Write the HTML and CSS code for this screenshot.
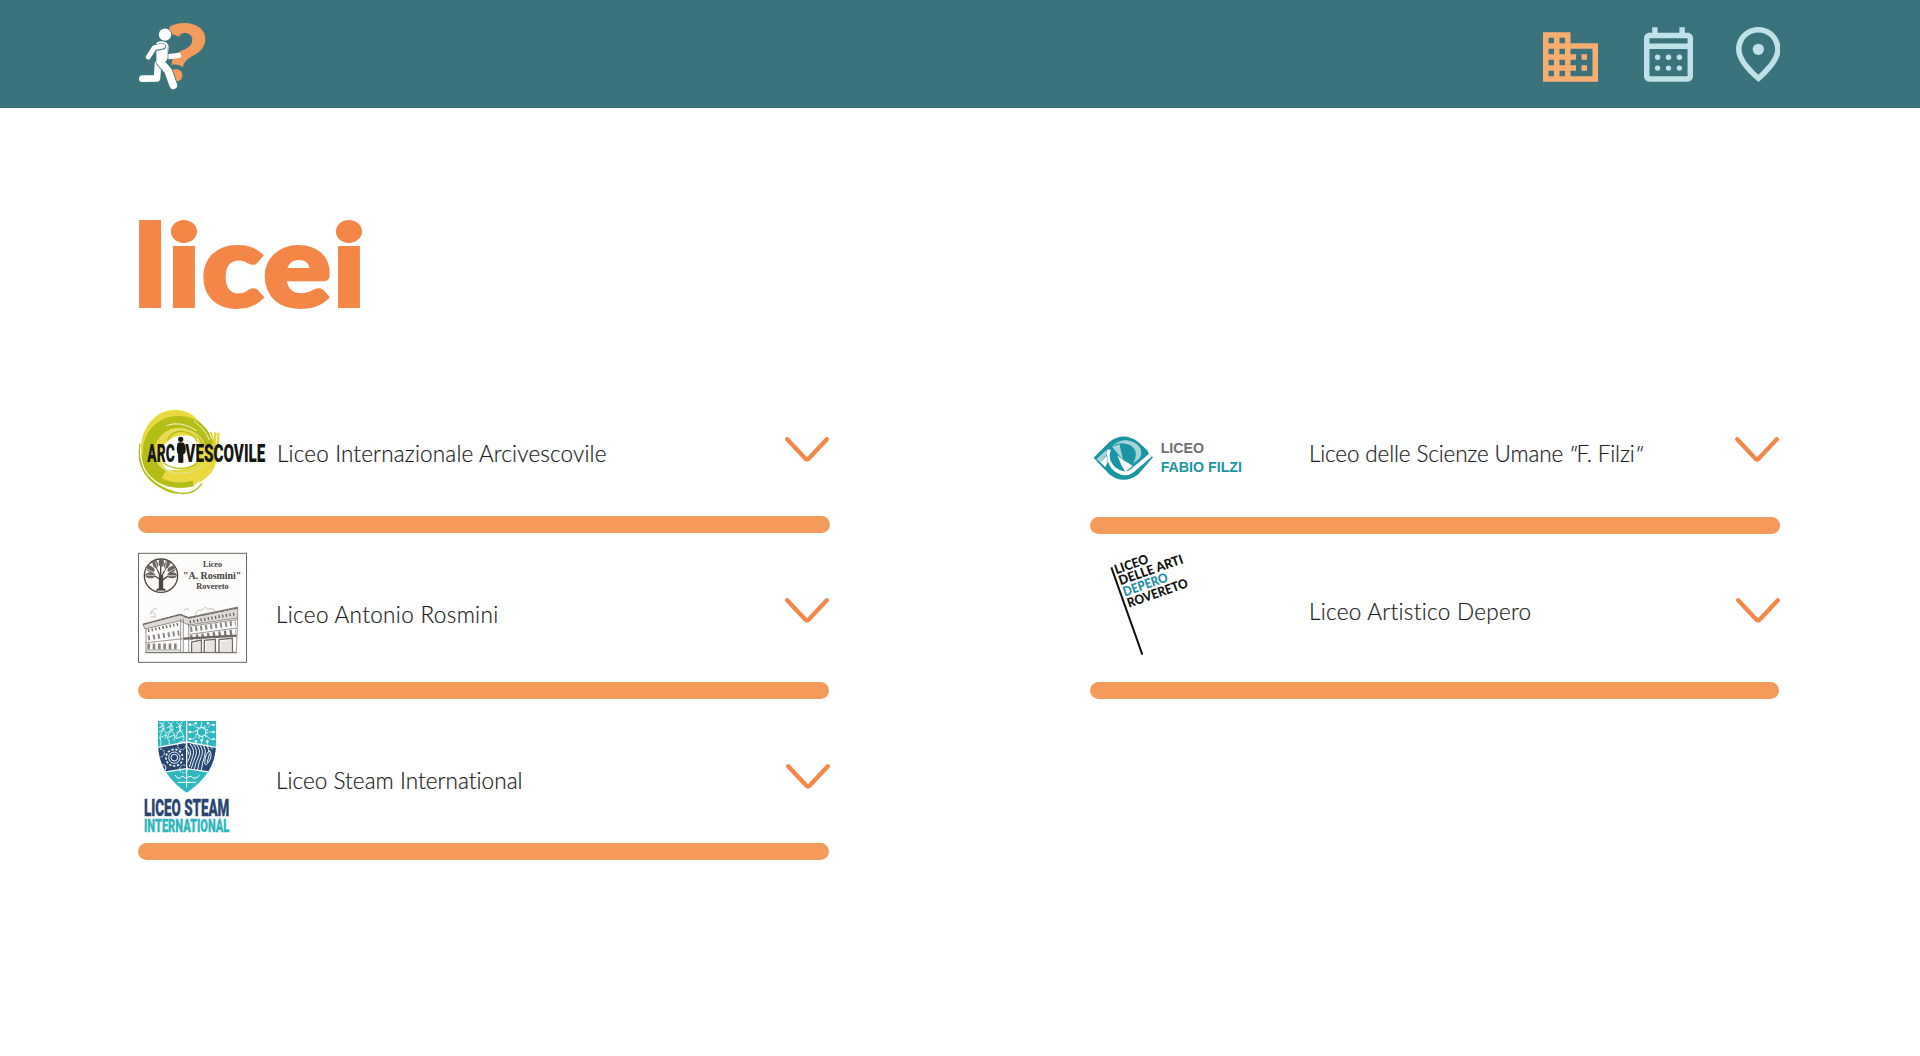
FILE: index.html
```html
<!DOCTYPE html>
<html lang="it">
<head>
<meta charset="utf-8">
<title>Licei</title>
<link rel="stylesheet" href="styles.css">
</head>
<body>
<header class="topbar">
  <a class="brand" aria-label="Home">
    <svg class="brand-mark" viewBox="54 60 210 216">
      <g fill="#f49b5b">
        <path d="M147 82C160 72 175 69 192 69C230 69 256 88 256 117C256 146 234 160 212 171C199 178 192 188 188 202C178 194 168 192 154 195C157 180 160 166 172 158C190 150 217 142 217 120C217 106 206 99 194 99C185 99 180 104 175 111C169 105 162 102 153 104Z"/>
        <circle cx="168" cy="226" r="19"/>
      </g>
      <g fill="none" stroke-linecap="round" stroke-linejoin="round">
        <path d="M148 170L176 166" stroke="#fff" stroke-width="16"/>
        <path d="M114 192L111 235L67 236" stroke="#fff" stroke-width="20"/>
        <path d="M121 186L144 212L160 256" stroke="#3b737d" stroke-width="28"/>
        <path d="M121 186L144 212L160 256" stroke="#fff" stroke-width="23"/>
        <path d="M118 134Q136 130 137 144L132 176L119 185Z" fill="#fff" stroke="#fff" stroke-width="19"/>
        <path d="M144 143L144 176" stroke="#3b737d" stroke-width="2"/>
        <path d="M128 139L103 144L85 171" stroke="#3b737d" stroke-width="20"/>
        <path d="M128 138L103 143L85 171" stroke="#fff" stroke-width="15"/>
      </g>
      <circle cx="135" cy="104" r="21" fill="#3b737d"/>
      <circle cx="135" cy="104" r="18.5" fill="#fff"/>
    </svg>
  </a>
  <nav class="nav">
    <a class="nav-schools" aria-label="Scuole"><svg viewBox="2 3 20 18"><path d="M12 7V3H2v18h20V7H12zM6 19H4v-2h2v2zm0-4H4v-2h2v2zm0-4H4V9h2v2zm0-4H4V5h2v2zm4 12H8v-2h2v2zm0-4H8v-2h2v2zm0-4H8V9h2v2zm0-4H8V5h2v2zm10 12h-8v-2h2v-2h-2v-2h2v-2h-2V9h8v10zm-2-8h-2v2h2v-2zm0 4h-2v2h2v-2z"/></svg></a>
    <a class="nav-calendar" aria-label="Calendario"><svg viewBox="3 2 18 20"><path d="M19 4h-1V2h-2v2H8V2H6v2H5c-1.1 0-2 .9-2 2v14c0 1.1.9 2 2 2h14c1.1 0 2-.9 2-2V6c0-1.1-.9-2-2-2zm0 16H5V10h14v10zm0-12H5V6h14v2z"/><circle cx="8" cy="13" r="1"/><circle cx="12" cy="13" r="1"/><circle cx="16" cy="13" r="1"/><circle cx="8" cy="17" r="1"/><circle cx="12" cy="17" r="1"/><circle cx="16" cy="17" r="1"/></svg></a>
    <a class="nav-map" aria-label="Mappa"><svg viewBox="3.9 2 16.2 20"><path d="M12 2c-4.2 0-8.1 3.22-8.1 8.2 0 3.32 2.77 7.25 8.1 11.8 5.33-4.55 8.1-8.48 8.1-11.8C20.1 5.22 16.2 2 12 2zm0 17.33c-4.05-3.7-6.1-6.79-6.1-9.14C5.9 6.57 8.65 4 12 4s6.1 2.57 6.1 6.2c0 2.34-2.05 5.44-6.1 9.13z"/><circle cx="12" cy="10.1" r="2.05"/></svg></a>
  </nav>
</header>

<main class="page">
  <h1 class="title">licei</h1>
  <div class="columns">
    <section class="column">
      <article class="school arcivescovile">
        <svg class="logo" viewBox="24 0 402 348">
          <g fill="none">
            <ellipse cx="135" cy="145" rx="87" ry="101" stroke="#e9d93e" stroke-width="30"/>
            <ellipse cx="162" cy="168" rx="84" ry="76" stroke="#ead942" stroke-width="28"/>
            <path d="M86 212Q120 246 170 240Q226 226 236 178L212 176Q190 206 140 210Z" fill="#e9d93e"/>
            <path d="M234 134A90 88 0 1 0 98 228" stroke="#b5bd17" stroke-width="36"/>
            <path d="M240 98Q264 150 245 186" stroke="#c9cb28" stroke-width="8"/>
            <path d="M44 160Q44 214 88 240T190 250" stroke="#b5bd17" stroke-width="18"/>
            <path d="M256 97L254 140M265 98Q266 160 246 200M205 226Q232 215 246 190" stroke="#e6d736" stroke-width="7"/>
            <path d="M30 130Q16 220 98 262T216 250M27 170Q38 248 128 278L156 280" stroke="#b5bd17" stroke-width="4"/>
            <path d="M38 200Q74 262 140 265T206 244M205 60Q232 78 248 118M192 64Q226 88 238 120M110 77Q150 60 200 92" stroke="#fff" stroke-width="2.5"/>
            <path d="M93 119Q112 88 164 88Q206 96 222 130M84 190Q104 221 159 219Q199 217 218 192" stroke="#dfe277" stroke-width="4"/>
            <path d="M100 188Q117 202 145 205Q180 206 202 189M112 122Q125 92 158 94Q190 98 202 125" stroke="#b5bd17" stroke-width="4"/>
          </g>
          <g class="arc-text" fill="#151712">
            <text x="52" y="185" textLength="82" lengthAdjust="spacingAndGlyphs">ARC</text>
            <text x="166" y="185" textLength="240" lengthAdjust="spacingAndGlyphs">VESCOVILE</text>
            <circle cx="152" cy="118" r="8"/>
            <path d="M143 129Q152 124 162 129Q171 145 165 160L160 163L160 188H145L144 163Q137 150 143 129Z"/>
          </g>
        </svg>
        <div class="details"><h2 class="name">Liceo Internazionale Arcivescovile</h2><svg class="chevron" viewBox="0 0 44 26"><path d="M2.2 2.2L20.5 21.8Q22 23.4 23.5 21.8L41.8 2.2"/></svg></div>
      </article>
      <div class="rule"></div>
      <article class="school rosmini">
        <svg class="logo" viewBox="24 -41 402 447">
          <rect x="25.5" y="20" width="324" height="327" fill="#fdfcfa" stroke="#6b6662" stroke-width="3"/>
          <circle cx="93" cy="87" r="50" fill="#fdfcfa" stroke="#494640" stroke-width="4"/>
          <g stroke="#494640" fill="none">
            <path d="M93 132V86" stroke-width="13"/>
            <path d="M92 100L62 79M92 91L76 56M94 91L112 55M96 101L124 81M92 89V50" stroke-width="4"/>
            <path d="M80 131Q93 121 106 131" stroke-width="6"/>
          </g>
          <g fill="#67635d">
            <ellipse cx="61" cy="86" rx="15" ry="9"/><ellipse cx="61" cy="67" rx="14" ry="9" transform="rotate(30 61 67)"/><ellipse cx="76" cy="52" rx="8" ry="13" transform="rotate(-20 76 52)"/><ellipse cx="94" cy="48" rx="8" ry="12"/><ellipse cx="111" cy="53" rx="8" ry="13" transform="rotate(25 111 53)"/><ellipse cx="125" cy="68" rx="13" ry="9" transform="rotate(-30 125 68)"/><ellipse cx="126" cy="86" rx="14" ry="9"/>
          </g>
          <path d="M48 66L80 81M49 86L81 86M76 45L85 72M110 44L103 73M137 66L107 80M137 87L106 87" stroke="#fdfcfa" stroke-width="2"/>
          <g class="ros-text" fill="#45413c">
            <text x="219" y="61" textLength="57" lengthAdjust="spacingAndGlyphs">Liceo</text>
            <text class="ros-main" x="159" y="96" textLength="175" lengthAdjust="spacingAndGlyphs">"A. Rosmini"</text>
            <text x="199" y="128" textLength="97" lengthAdjust="spacingAndGlyphs">Rovereto</text>
          </g>
          <g fill="none" stroke="#6a6662">
            <path d="M39 233L150 203L176 212L323 181V214L176 235L150 222L45 247Z" fill="#dddad6" stroke-width="2"/>
            <path d="M48 246V317H319L323 212M152 216V318M160 216V318M176 230V318" stroke-width="2"/>
            <path d="M39 233L150 204L176 214L322 184" stroke-width="4" stroke-dasharray="13 1"/>
            <path d="M54 252L148 232M179 226L318 201" stroke-width="9" stroke-dasharray="4 7"/>
            <path d="M54 274L148 259M181 249L317 229" stroke-width="15" stroke-dasharray="6 9" stroke="#8b8783"/>
            <path d="M181 273L317 255" stroke-width="15" stroke-dasharray="7 10" stroke="#7b7773"/>
            <path d="M52 299H148" stroke-width="17" stroke-dasharray="8 8" stroke="#8b8783"/>
            <path d="M50 288L151 277L319 269M50 310H150M178 239L321 219M178 263L321 244" stroke-width="2"/>
            <path d="M161 276L320 267" stroke-width="7"/>
            <path d="M185 316V286L214 280V316M223 316V281L256 278V316M267 316V279L307 275V316" stroke-width="4"/>
            <path d="M189 316V289L211 284V316ZM228 316V286L252 283V316ZM272 316V284L304 280V316Z" fill="#e7e4df" stroke="none"/>
            <path d="M60 203Q65 186 81 186M61 200Q74 188 76 210L62 211M196 205Q200 188 216 190Q225 177 234 188Q252 181 255 195M161 191Q169 184 178 188" stroke-width="2" stroke="#aaa6a2"/>
            <path d="M46 318H320" stroke-width="3"/>
          </g>
        </svg>
        <div class="details"><h2 class="name">Liceo Antonio Rosmini</h2><svg class="chevron" viewBox="0 0 44 26"><path d="M2.2 2.2L20.5 21.8Q22 23.4 23.5 21.8L41.8 2.2"/></svg></div>
      </article>
      <div class="rule short"></div>
      <article class="school steam">
        <svg class="logo" viewBox="24 -3 402 432">
          <defs><clipPath id="shield"><path d="M84 63H258V125C258 190 232 236 170 278C110 236 84 190 84 125Z"/></clipPath></defs>
          <g clip-path="url(#shield)" fill="none" stroke="#e8f8f8">
            <path d="M80 60H262V285H80Z" fill="#2fb7bf" stroke="none"/>
            <path d="M80 143L170 126L262 143V218L170 206L80 218Z" fill="#294672" stroke="none"/>
            <path d="M88 68Q109 74 98 92T91 117T92 137M103 65Q87 80 101 90T105 116M113 66Q136 77 122 94T115 119T116 133M130 64Q111 80 126 94T130 123M139 66Q161 80 147 95T140 117M158 64Q140 80 154 96T157 126M88 83L103 75M87 96L105 86M88 114L108 105M110 84L128 76M111 98L131 88M112 113L133 105M138 83L157 76M139 98L158 91M138 116L160 108" stroke-width="2.7"/>
            <circle cx="215" cy="96" r="13" stroke-width="4"/><circle cx="215" cy="96" r="18" stroke-width="5" stroke-dasharray="4 7.3"/>
            <path d="M178 74H190L198 83M175 96H194M176 117H191L200 107M215 77V66M234 83L243 74H256M237 96H256M230 109L241 118H256M198 136V121M215 136V117M232 136V121" stroke-width="2.5"/>
            <g fill="#e8f8f8" stroke="none"><circle cx="180" cy="74" r="4"/><circle cx="180" cy="96" r="4"/><circle cx="180" cy="117" r="4"/><circle cx="197" cy="70" r="4"/><circle cx="234" cy="70" r="4"/><circle cx="250" cy="75" r="4"/><circle cx="250" cy="96" r="4"/><circle cx="250" cy="117" r="4"/><circle cx="198" cy="124" r="4"/><circle cx="215" cy="121" r="4"/><circle cx="232" cy="124" r="4"/></g>
            <circle cx="133" cy="173" r="10" stroke-width="3"/><circle cx="133" cy="173" r="17" stroke-width="3"/><circle cx="133" cy="173" r="25" stroke-width="5" stroke-dasharray="7 5"/>
            <circle cx="155" cy="137" r="12" stroke-width="3" stroke-dasharray="6 3"/><circle cx="91" cy="159" r="12" stroke-width="3" stroke-dasharray="6 3"/><circle cx="161" cy="207" r="12" stroke-width="3" stroke-dasharray="6 3"/><circle cx="98" cy="204" r="10" stroke-width="3"/>
            <path d="M174 140Q185 153 181 165T173 185M180 132Q195 150 189 167T178 201M190 132Q204 152 197 168T184 205M200 134Q214 153 206 169T193 207M210 136Q222 153 214 170T203 210M221 137Q230 152 224 168T213 213M231 138Q240 149 235 158M241 140L248 148M173 151L177 164" stroke-width="3"/>
            <path d="M224 188Q226 158 240 152Q249 170 233 190Q226 199 224 188ZM231 188L239 160" stroke-width="3"/>
            <path d="M80 143L170 126L262 143M80 220L170 206L262 220M170 62V206" stroke="#fff" stroke-width="4"/>
            <path d="M170 209V263M135 225Q141 237 150 235Q158 222 168 237Q181 222 190 235Q202 236 209 225M143 247H198" stroke="#fff" stroke-width="3"/>
          </g>
          <g class="steam-text">
            <text x="42" y="348" textLength="256" lengthAdjust="spacingAndGlyphs" fill="#294672" stroke="#294672">LICEO STEAM</text>
            <text class="steam-sub" x="42" y="395" textLength="256" lengthAdjust="spacingAndGlyphs" fill="#2fb7bf" stroke="#2fb7bf">INTERNATIONAL</text>
          </g>
        </svg>
        <div class="details"><h2 class="name">Liceo Steam International</h2><svg class="chevron" viewBox="0 0 44 26"><path d="M2.2 2.2L20.5 21.8Q22 23.4 23.5 21.8L41.8 2.2"/></svg></div>
      </article>
      <div class="rule short"></div>
    </section>

    <section class="column">
      <article class="school filzi">
        <svg class="logo" viewBox="30 -60 600 351">
          <path d="M41 113L88 66Q130 33 175 66L203 92L207 103L219 112L175 163Q130 196 88 163L53 127Z" fill="#1995a3"/>
          <path d="M96 78Q132 47 170 72Q192 90 180 113L159 131Q180 92 149 75Q121 63 96 78Z" fill="#a5d5da"/>
          <path d="M49 118L78 91L83 101L61 127Z" fill="#a5d5da"/>
          <path d="M61 127L80 108L83 126L76 142Z" fill="#fff"/>
          <path d="M87 89Q84 142 119 156Q139 166 158 151L211 106" fill="none" stroke="#fff" stroke-width="12"/>
          <path d="M98 80Q80 106 97 132Q110 150 128 151L146 146L98 80Z" fill="#1995a3"/>
          <path d="M96 80L129 120L119 73Z" fill="#a5d5da"/>
          <path d="M112 106L129 120L146 130L158 138L136 155L124 135Z" fill="#fff"/>
          <path d="M119 75L131 119L137 97L157 129Q176 93 147 77Q132 70 119 75Z" fill="#1995a3"/>
          <g class="filzi-text">
            <text x="242" y="100" textLength="130" lengthAdjust="spacingAndGlyphs" fill="#707070">LICEO</text>
            <text x="242" y="157" textLength="244" lengthAdjust="spacingAndGlyphs" fill="#1995a3">FABIO FILZI</text>
          </g>
        </svg>
        <div class="details"><h2 class="name">Liceo delle Scienze Umane <span class="slanted">"</span>F. Filzi<span class="slanted">"</span></h2><svg class="chevron" viewBox="0 0 44 26"><path d="M2.2 2.2L20.5 21.8Q22 23.4 23.5 21.8L41.8 2.2"/></svg></div>
      </article>
      <div class="rule"></div>
      <article class="school depero">
        <svg class="logo" viewBox="30 -18 600 444">
          <path d="M94 82L187 344" stroke="#111" stroke-width="6"/>
          <g class="depero-text" fill="#111" transform="translate(109 103) rotate(-19.3)">
            <text x="0" y="0" textLength="105" lengthAdjust="spacingAndGlyphs">LICEO</text>
            <text x="1" y="35" textLength="202" lengthAdjust="spacingAndGlyphs">DELLE ARTI</text>
            <text x="2" y="71" textLength="140" lengthAdjust="spacingAndGlyphs" fill="#1e8fa5">DEPERO</text>
            <text x="3" y="107" textLength="190" lengthAdjust="spacingAndGlyphs">ROVERETO</text>
          </g>
        </svg>
        <div class="details"><h2 class="name">Liceo Artistico Depero</h2><svg class="chevron" viewBox="0 0 44 26"><path d="M2.2 2.2L20.5 21.8Q22 23.4 23.5 21.8L41.8 2.2"/></svg></div>
      </article>
      <div class="rule short"></div>
    </section>
  </div>
</main>
</body>
</html>
```

FILE: styles.css
```css
* { box-sizing: border-box; }
body { margin: 0; background: #fff; color: #1d1d1b; font-family: Lato, sans-serif; min-height: 100vh; }

.topbar { height: 108px; padding: 20px 139.7px 26px 138px; background: #3b737d; display: flex; justify-content: space-between; align-items: flex-start; }
.brand-mark { display: block; width: 70px; height: 72px; }
.nav { height: 62px; display: flex; align-items: flex-end; }
.nav svg { display: block; width: 100%; height: 100%; }
.nav-schools { width: 55px; height: 50px; margin-right: 46px; fill: #f7ad70; }
.nav-calendar { width: 49px; height: 55px; margin-right: 42.6px; fill: #c1e1e8; }
.nav-map { width: 44.7px; height: 55px; fill: #c1e1e8; }

.page { padding: 90px 140px 0 138px; }
.title { margin: 0 0 0 -4px; width: 240px; height: 202px; font-size: 113px; line-height: 129px; font-weight: 900; color: #f48648; letter-spacing: 1.2px; -webkit-text-stroke: 4px #f48648; transform: scaleX(1.12); transform-origin: left; }

.columns { display: grid; grid-template-columns: 692px 690px; gap: 260px; }
.school { display: flex; align-items: flex-start; }
.logo { display: block; flex: none; width: 134px; height: 100%; overflow: visible; }
.details { flex: 1; display: flex; justify-content: space-between; align-items: flex-start; }
.name { margin: 1.5px 0 0; font-size: 22.5px; line-height: 30px; font-weight: 300; white-space: nowrap; font-variant-ligatures: none; -webkit-text-stroke: 0.2px #1d1d1b; }
.slanted { display: inline-block; transform: skewX(-14deg); }
.chevron { display: block; width: 44px; height: 26px; fill: none; stroke: #f48648; stroke-width: 4.2; stroke-linecap: round; stroke-linejoin: round; }
.rule { height: 17px; border-radius: 9px; background: #f49b5b; }
.rule.short { width: calc(100% - 1px); }

.arcivescovile { height: 116px; }
.arcivescovile .details { padding: 37px 1px 0 5px; }
.arcivescovile .name { letter-spacing: 0.16px; }
.rosmini { height: 149px; }
.rosmini .details { padding: 65px 1px 0 4px; }
.rosmini .name { letter-spacing: 0.35px; }
.steam { height: 144px; }
.steam .details { padding: 65px 0 0 4px; }
.steam .name { letter-spacing: 0.06px; }
.filzi { height: 117px; }
.filzi .logo, .depero .logo { width: 200px; }
.filzi .details { padding: 37px 1px 0 19px; }
.filzi .name { letter-spacing: -0.14px; }
.depero { height: 148px; }
.depero .details { padding: 64px 0 0 19px; }
.depero .name { margin-top: -1px; letter-spacing: 0.3px; }

.arc-text { font: 900 77px Roboto, sans-serif; }
.ros-text { font: 700 22px "Liberation Serif", serif; }
.ros-main { font-size: 30px; }
.steam-text { font: 900 71px Roboto, sans-serif; stroke-width: 1; }
.steam-sub { font-size: 56px; }
.filzi-text { font: 700 44px "Liberation Sans", sans-serif; }
.depero-text { font: 900 39px Lato, sans-serif; }
```
